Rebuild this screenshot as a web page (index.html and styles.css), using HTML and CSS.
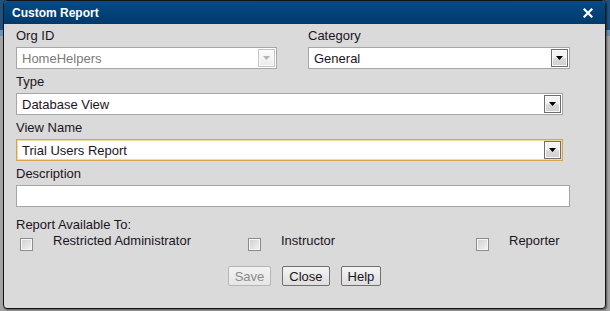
FILE: index.html
```html
<!DOCTYPE html>
<html lang="en">
<head>
  <meta charset="UTF-8" />
  <title>Custom Report</title>
  <link rel="stylesheet" href="styles.css">
</head>
<body>
  <div class="dialog">
    <div class="titlebar">
      <span class="title">Custom Report</span>
      <svg class="close-x" width="10" height="10" viewBox="0 0 10 10"><path d="M1.5 1.5 L8.5 8.5 M8.5 1.5 L1.5 8.5" stroke="#fff" stroke-width="2.2" stroke-linecap="square"/></svg>
    </div>
    <div class="content">
      <div class="row two">
        <div class="field org">
          <div class="label">Org ID</div>
          <div class="select disabled">
            <span class="value">HomeHelpers</span>
            <span class="arrow"><svg width="7" height="4" viewBox="0 0 7 4"><path d="M0 0 H7 L3.5 4 Z" fill="#b4b4b4"/></svg></span>
          </div>
        </div>
        <div class="field cat">
          <div class="label">Category</div>
          <div class="select">
            <span class="value">General</span>
            <span class="arrow"><svg width="7" height="4" viewBox="0 0 7 4"><path d="M0 0 H7 L3.5 4 Z" fill="#000"/></svg></span>
          </div>
        </div>
      </div>
      <div class="field">
        <div class="label">Type</div>
        <div class="select wide">
          <span class="value">Database View</span>
          <span class="arrow"><svg width="7" height="4" viewBox="0 0 7 4"><path d="M0 0 H7 L3.5 4 Z" fill="#000"/></svg></span>
        </div>
      </div>
      <div class="field">
        <div class="label">View Name</div>
        <div class="select wide focus">
          <span class="value">Trial Users Report</span>
          <span class="arrow"><svg width="7" height="4" viewBox="0 0 7 4"><path d="M0 0 H7 L3.5 4 Z" fill="#000"/></svg></span>
        </div>
      </div>
      <div class="field">
        <div class="label">Description</div>
        <div class="input"></div>
      </div>
      <div class="label avail">Report Available To:</div>
      <div class="checks">
        <div class="check"><span class="box"></span><span>Restricted Administrator</span></div>
        <div class="check"><span class="box"></span><span>Instructor</span></div>
        <div class="check"><span class="box"></span><span>Reporter</span></div>
      </div>
      <div class="buttons">
        <button class="btn" disabled>Save</button>
        <button class="btn">Close</button>
        <button class="btn">Help</button>
      </div>
    </div>
  </div>
</body>
</html>
```

FILE: styles.css
```css
* { box-sizing: border-box; }
body {
  margin: 0;
  height: 311px;
  overflow: hidden;
  font-family: "Liberation Sans", Arial, sans-serif;
  font-size: 13px;
  color: #1c1424;
  background: linear-gradient(#1f5281 0 30px, #6e93b4 30px 36px, #a4a4a4 36px);
}
.dialog {
  margin-left: 3px;
  width: 603px;
  height: 309px;
  background: #dadada;
  border: 1px solid #141414;
  border-radius: 4px;
  overflow: hidden;
  box-shadow: 1px 1px 2px rgba(0,0,0,0.5);
}
.titlebar {
  height: 23px;
  background: linear-gradient(#054a86, #003a6c);
  display: flex;
  align-items: center;
  justify-content: space-between;
  padding: 0 12px 0 8px;
}
.title {
  color: #fff;
  font-weight: bold;
  font-size: 12px;
}
.close-x { margin-top: 1px; }
.content {
  padding: 4px 0 0 12px;
}
.row.two {
  display: flex;
  gap: 31px;
}
.field { margin-bottom: 5px; }
.label {
  line-height: 15px;
  margin-bottom: 4px;
}
.select {
  height: 22px;
  background: #fff;
  border: 1px solid #a6a6a6;
  display: flex;
  align-items: center;
  justify-content: space-between;
  padding: 0 1px 0 5px;
}
.org .select { width: 261px; }
.cat .select { width: 262px; }
.select.wide { width: 547px; }
.select.focus {
  border-color: #d9a34a;
  box-shadow: inset 0 0 0 1px #f3d9a8;
}
.select.disabled .value { color: #7a7a7a; }
.arrow {
  width: 17px;
  height: 18px;
  border: 1px solid #6e6e6e;
  box-shadow: inset 0 0 0 1px #fafafa;
  background: linear-gradient(#f4f4f4 0 45%, #dadada 55%, #d0d0d0);
  display: flex;
  align-items: center;
  justify-content: center;
}
.select.disabled .arrow {
  border-color: #c4c4c4;
  background: linear-gradient(#fbfbfb, #ececec);
}
.input {
  width: 554px;
  height: 22px;
  background: #fff;
  border: 1px solid #a6a6a6;
}
.avail {
  margin-top: 10px;
  margin-bottom: 1px;
}
.checks {
  display: flex;
  line-height: 15px;
}
.check {
  flex: 0 0 228px;
  display: flex;
  align-items: flex-start;
  gap: 20px;
  padding-left: 4px;
}
.box {
  width: 13px;
  height: 13px;
  margin-top: 5px;
  border: 1px solid #8c8c8c;
  box-shadow: inset 0 0 0 1px #f6f6f6;
  background: linear-gradient(135deg, #cfcfcf, #f3f3f3);
}
.buttons {
  display: flex;
  justify-content: center;
  gap: 11px;
  margin-top: 15px;
  padding-right: 12px;
}
.btn {
  height: 20px;
  padding: 0 6px;
  font-family: "Liberation Sans", Arial, sans-serif;
  font-size: 13px;
  color: #1c1424;
  border: 1px solid #6f6f6f;
  border-radius: 2px;
  background: linear-gradient(#f4f4f4, #dedede);
}
.btn[disabled] {
  color: #8a8a8a;
  border-color: #b6b6b6;
  background: linear-gradient(#f2f2f2, #e6e6e6);
}
```
